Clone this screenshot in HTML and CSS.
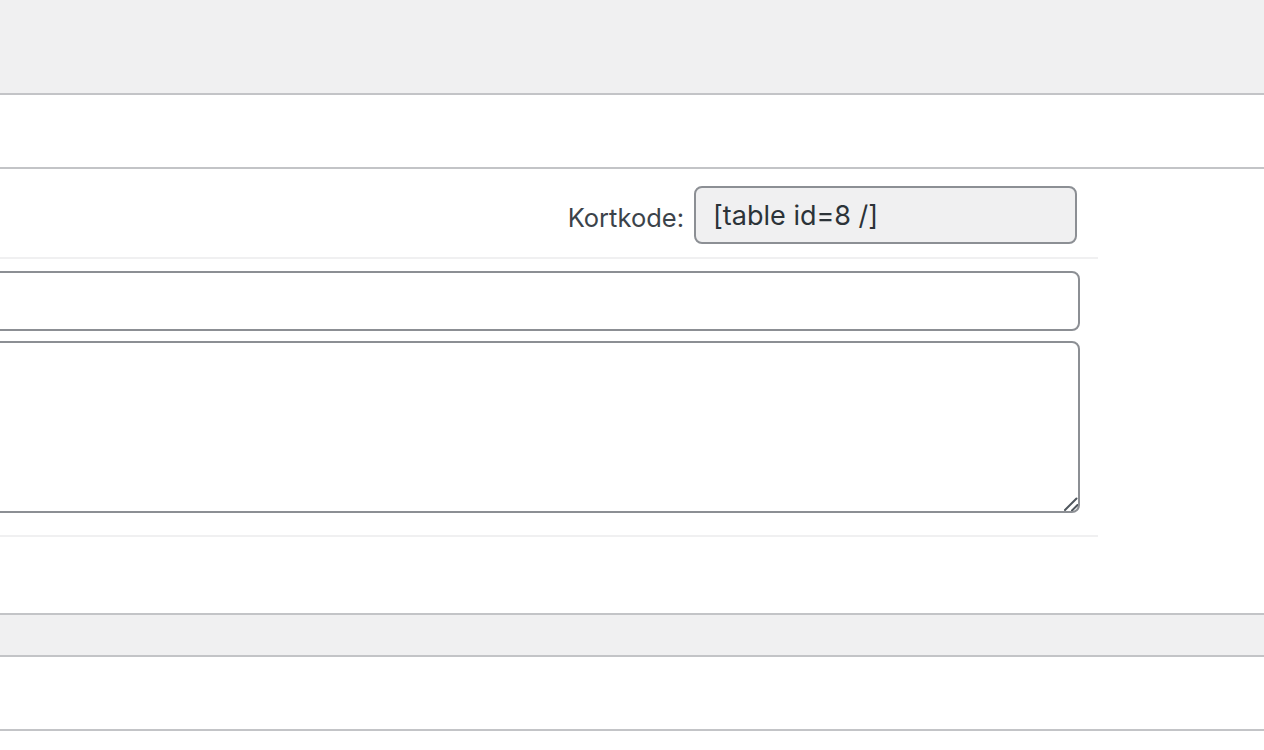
FILE: index.html
```html
<!DOCTYPE html>
<html lang="no">
<head>
<meta charset="utf-8">
<title>Tabell</title>
<link rel="stylesheet" href="styles.css">
</head>
<body>
<div class="page">
  <div class="topbar"></div>
  <div class="band"></div>
  <div class="panel">
    <div class="inner">
      <div class="shortcode-row">
        <label class="sc-label" for="sc">Kortkode:</label>
        <input id="sc" class="sc-input" type="text" value="[table id=8 /]" readonly>
      </div>
      <div class="fields">
        <input class="field-input" type="text" value="">
        <div class="text-wrap">
          <textarea class="field-text"></textarea>
          <svg class="grip" width="16" height="16" viewBox="0 0 16 16" aria-hidden="true">
            <path d="M3 15 L14.5 3.5 M10 15.5 L15.5 10" stroke="#50575e" stroke-width="2" stroke-linecap="round" fill="none"/>
          </svg>
        </div>
      </div>
    </div>
  </div>
  <div class="footbar"></div>
  <div class="band"></div>
</div>
</body>
</html>
```
FILE: styles.css
```css
html, body {
  margin: 0;
  padding: 0;
  background: #ffffff;
  overflow: hidden;
  font-family: Inter, "Noto Sans", "Liberation Sans", sans-serif;
  color: #3c434a;
}
.page {
  margin-left: -400px;
  width: 1664px;
}
.topbar {
  height: 93px;
  background: #f0f0f1;
  border-bottom: 2px solid #c3c4c7;
}
.band {
  height: 72px;
  background: #ffffff;
  border-bottom: 2px solid #c3c4c7;
}
.panel {
  height: 444px;
  background: #ffffff;
}
.inner {
  width: 1498px;
}
.shortcode-row {
  display: flex;
  justify-content: flex-end;
  align-items: center;
  gap: 10px;
  padding: 17px 21px 13px 0;
  border-bottom: 2px solid #f0f0f1;
}
.sc-label {
  font-size: 25.5px;
  color: #3c434a;
  padding-top: 4px;
}
.sc-input {
  box-sizing: border-box;
  width: 383px;
  height: 58px;
  border: 2px solid #8c8f94;
  border-radius: 8px;
  background: #f0f0f1;
  color: #2c3338;
  font-family: inherit;
  font-size: 27px;
  padding: 0 17px;
  outline: none;
}
.fields {
  display: flex;
  flex-direction: column;
  gap: 10px;
  padding: 12px 18px 22px 0;
  border-bottom: 2px solid #f0f0f1;
}
.field-input {
  box-sizing: border-box;
  width: 100%;
  height: 60px;
  border: 2px solid #8c8f94;
  border-radius: 8px;
  background: #ffffff;
  margin: 0;
  outline: none;
}
.text-wrap {
  position: relative;
}
.field-text {
  box-sizing: border-box;
  width: 100%;
  height: 172px;
  border: 2px solid #8c8f94;
  border-radius: 8px;
  background: #ffffff;
  margin: 0;
  outline: none;
  display: block;
  resize: none;
}
.grip {
  position: absolute;
  right: 2px;
  bottom: 2px;
  display: block;
}
.footbar {
  height: 40px;
  background: #f0f0f1;
  border-top: 2px solid #c3c4c7;
  border-bottom: 2px solid #c3c4c7;
}
```
